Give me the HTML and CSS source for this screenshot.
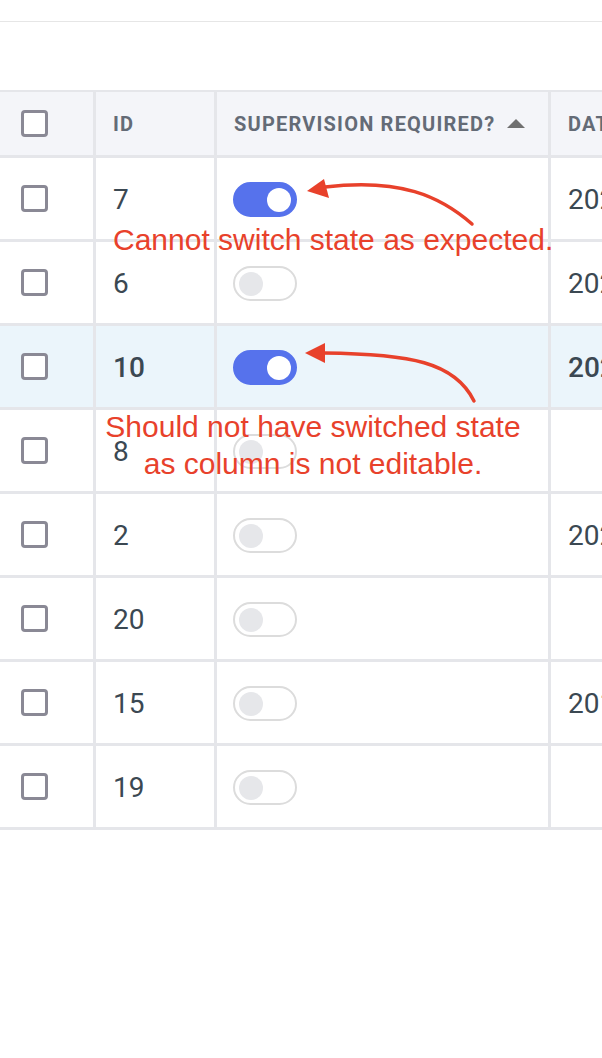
FILE: index.html
```html
<!DOCTYPE html>
<html>
<head>
<meta charset="utf-8">
<link rel="stylesheet" href="styles.css">
</head>
<body>
<div class="topbar"></div>
<div class="table">
  <div class="row head">
    <div class="cell cb"><span class="box"></span></div>
    <div class="cell"><span class="th">ID</span></div>
    <div class="cell"><span class="th">SUPERVISION REQUIRED?</span><span class="sort"></span></div>
    <div class="cell"><span class="th">DATE CREATED</span></div>
  </div>
  <div class="row">
    <div class="cell cb"><span class="box"></span></div>
    <div class="cell">7</div>
    <div class="cell"><span class="toggle on"><span class="knob"></span></span></div>
    <div class="cell">2021-03-12</div>
  </div>
  <div class="row">
    <div class="cell cb"><span class="box"></span></div>
    <div class="cell">6</div>
    <div class="cell"><span class="toggle"><span class="knob"></span></span></div>
    <div class="cell">2021-02-28</div>
  </div>
  <div class="row sel">
    <div class="cell cb"><span class="box"></span></div>
    <div class="cell">10</div>
    <div class="cell"><span class="toggle on"><span class="knob"></span></span></div>
    <div class="cell">2021-04-02</div>
  </div>
  <div class="row">
    <div class="cell cb"><span class="box"></span></div>
    <div class="cell">8</div>
    <div class="cell"><span class="toggle"><span class="knob"></span></span></div>
    <div class="cell"></div>
  </div>
  <div class="row">
    <div class="cell cb"><span class="box"></span></div>
    <div class="cell">2</div>
    <div class="cell"><span class="toggle"><span class="knob"></span></span></div>
    <div class="cell">2020-11-05</div>
  </div>
  <div class="row">
    <div class="cell cb"><span class="box"></span></div>
    <div class="cell">20</div>
    <div class="cell"><span class="toggle"><span class="knob"></span></span></div>
    <div class="cell"></div>
  </div>
  <div class="row">
    <div class="cell cb"><span class="box"></span></div>
    <div class="cell">15</div>
    <div class="cell"><span class="toggle"><span class="knob"></span></span></div>
    <div class="cell">2019-08-21</div>
  </div>
  <div class="row">
    <div class="cell cb"><span class="box"></span></div>
    <div class="cell">19</div>
    <div class="cell"><span class="toggle"><span class="knob"></span></span></div>
    <div class="cell"></div>
  </div>
</div>

<svg class="arrows" width="602" height="1058" viewBox="0 0 602 1058">
  <path d="M472 224 C440 196 400 178 325 187" fill="none" stroke="#e8412b" stroke-width="3.5" stroke-linecap="round"/>
  <polygon points="307,191 324,179 329,198" fill="#e8412b"/>
  <path d="M474 401 C455 362 410 354 324 353" fill="none" stroke="#e8412b" stroke-width="3.5" stroke-linecap="round"/>
  <polygon points="305,353 325,343 325,363" fill="#e8412b"/>
</svg>
<div class="note note1">Cannot switch state as expected.</div>
<div class="note note2">Should not have switched state<br>as column is not editable.</div>
</body>
</html>
```
FILE: styles.css
```css
html, body {
  margin: 0;
  padding: 0;
  overflow: hidden;
  background: #ffffff;
}
body {
  position: relative;
  width: 602px;
  height: 1058px;
  font-family: Roboto, "Liberation Sans", sans-serif;
}
.topbar {
  height: 21px;
  border-bottom: 1px solid #e6e6e6;
}
.table {
  margin-top: 68px;
  width: 900px;
  display: flex;
  flex-direction: column;
  gap: 3px;
  padding: 2px 0 3px;
  background: #e5e6ea;
}
.row {
  display: grid;
  grid-template-columns: 93px 118px 331px 1fr;
  column-gap: 3px;
  height: 81px;
}
.row.head {
  height: 63px;
}
.cell {
  background: #ffffff;
  display: flex;
  align-items: center;
  padding-left: 17px;
  padding-top: 2px;
  font-size: 28px;
  color: #3b4852;
  white-space: nowrap;
  overflow: hidden;
}
.head .cell {
  background: #f4f5f9;
  padding-top: 0;
}
.sel .cell {
  background: #ebf5fb;
  font-weight: 500;
}
.cell.cb {
  padding-left: 21px;
  padding-top: 0;
}
.box {
  width: 21px;
  height: 21px;
  border: 3.5px solid #8a8995;
  border-radius: 4px;
  background: #ffffff;
}
.th {
  font-size: 20px;
  font-weight: 700;
  color: #646b76;
  letter-spacing: 1.2px;
}
.sort {
  margin-left: 12px;
  width: 0;
  height: 0;
  border-left: 9.5px solid transparent;
  border-right: 9.5px solid transparent;
  border-bottom: 9px solid #707070;
}
.toggle {
  box-sizing: border-box;
  width: 64px;
  height: 35px;
  margin-left: -1px;
  border-radius: 18px;
  border: 2px solid #dcdcdc;
  background: #ffffff;
  display: flex;
  align-items: center;
  padding: 0 4px;
}
.toggle .knob {
  width: 24px;
  height: 24px;
  border-radius: 50%;
  background: #e6e7ea;
}
.toggle.on {
  background: #5672ec;
  border-color: #5672ec;
  justify-content: flex-end;
}
.toggle.on .knob {
  background: #ffffff;
}
.arrows {
  position: absolute;
  left: 0;
  top: 0;
  pointer-events: none;
}
.note {
  position: absolute;
  font-family: "Liberation Sans", Arial, sans-serif;
  font-size: 30px;
  color: #e8412b;
  white-space: nowrap;
}
.note1 {
  left: 113px;
  top: 222px;
  line-height: 36px;
}
.note2 {
  left: 73px;
  width: 480px;
  top: 408px;
  line-height: 37px;
  text-align: center;
}
```
